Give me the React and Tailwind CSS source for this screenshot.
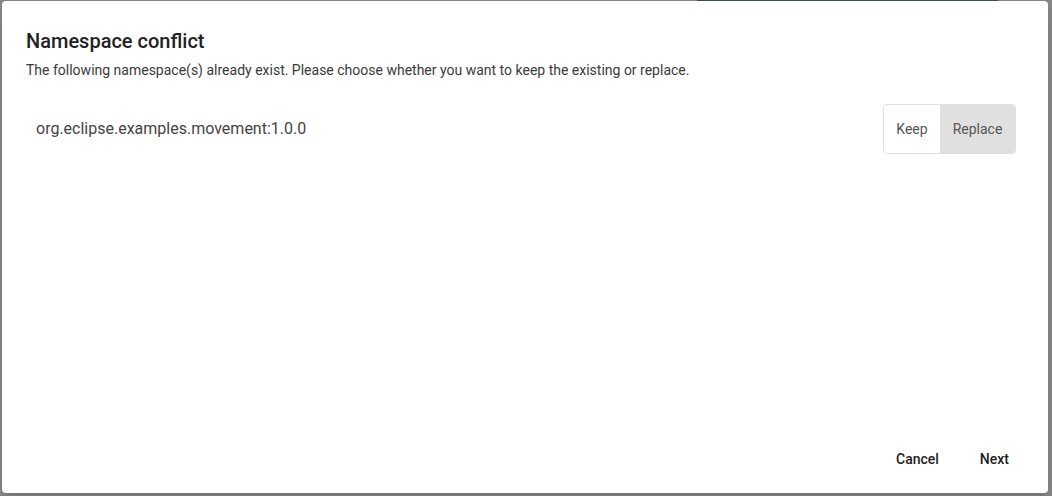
export default function App() {
  return (
    <div className="h-[496px] w-[1052px] bg-[#858585] flex flex-col overflow-hidden" style={{ fontFamily: "Roboto, 'Liberation Sans', sans-serif" }}>
      {/* thing behind the backdrop */}
      <div className="h-[1px] flex">
        <div className="ml-[697px] w-[301px] bg-[#3e4763]" />
      </div>
      <div className="ml-[2px] mr-[4px] h-[492px] bg-white rounded-[4px] shadow-lg flex flex-col">
        <div className="pt-[28px] px-[24px]">
          <h2 className="text-[20px] leading-[24px] font-medium text-[#222]">Namespace conflict</h2>
          <p className="mt-[9px] text-[14px] leading-[16px] text-[#3a3a3a]">
            The following namespace(s) already exist. Please choose whether you want to keep the existing or replace.
          </p>
        </div>
        <div className="mt-[26px] ml-[34px] mr-[32px] flex items-center justify-between">
          <span className="text-[16px] text-[#444]">org.eclipse.examples.movement:1.0.0</span>
          <div className="flex h-[50px] border border-[#e0e0e0] rounded-[4px] overflow-hidden">
            <button className="w-[56px] text-[14px] text-[#555] bg-white">Keep</button>
            <button className="w-[75px] text-[14px] text-[#555] bg-[#e0e0e0]">Replace</button>
          </div>
        </div>
        <div className="flex-1" />
        <div className="flex justify-end gap-[25px] pr-[31px] pb-[16px]">
          <button className="h-[36px] px-[8px] text-[14px] font-medium text-[#222]">Cancel</button>
          <button className="h-[36px] px-[8px] text-[14px] font-medium text-[#222]">Next</button>
        </div>
      </div>
    </div>
  );
}
